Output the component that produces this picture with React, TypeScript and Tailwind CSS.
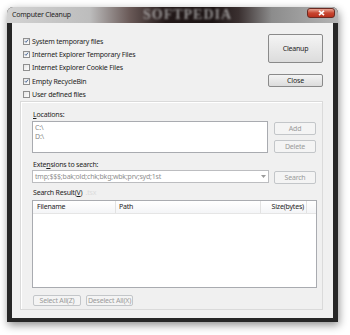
import React from 'react';

const font = "font-['Segoe_UI','Noto_Sans',sans-serif] tracking-[-0.2px]";

function Check({ checked, label }: { checked: boolean; label: string }) {
  return (
    <div className="flex items-center h-[13.3px]">
      <div className="w-[7px] h-[7px] border border-[#8f8f8f] bg-gradient-to-br from-[#e6e6e6] to-[#fdfdfd] flex items-center justify-center">
        {checked && (
          <svg width="6" height="6" viewBox="0 0 6 6">
            <path d="M1 3.2 L2.4 4.6 L5 1.2" stroke="#3c5d8f" strokeWidth="1.1" fill="none" />
          </svg>
        )}
      </div>
      <span className="ml-[2px] text-[7px] text-[#1e1e1e] leading-none whitespace-nowrap">{label}</span>
    </div>
  );
}

function Btn({ label, disabled, className }: { label: string; disabled?: boolean; className: string }) {
  return (
    <div
      className={
        'flex items-center justify-center whitespace-nowrap text-[7px] leading-none rounded-[2px] border ' +
        (disabled
          ? 'border-[#c3c6c9] bg-[#f4f4f4] text-[#9a9a9a] '
          : 'border-[#8a8a8a] bg-gradient-to-b from-[#f4f4f4] to-[#dcdcdc] text-[#1e1e1e] ') +
        className
      }
    >
      {label}
    </div>
  );
}

export default function App() {
  return (
    <div className={`w-[350px] h-[335px] bg-white pt-[7px] pl-[7px] ${font}`}>
      <div className="w-[331px] h-[315px] rounded-t-[6px] bg-[#262626] shadow-[1px_3px_8px_rgba(0,0,0,0.45)] flex flex-col overflow-hidden">
        {/* title bar */}
        <div className="relative h-[16px] shrink-0 bg-[linear-gradient(to_right,#d2d2d2_0%,#bdbdbd_25%,#6a5a58_37%,#221818_48%,#1c1414_62%,#3a3030_70%,#8c8c8c_80%,#b4b4b4_100%)]">
          <span className="absolute left-[5px] top-[4px] text-[7px] leading-none text-[#1e1e1e]">Computer Cleanup</span>
          <span className="absolute left-[136px] top-[1px] text-[14px] leading-none font-bold tracking-[1px] text-[#c4c4c4] opacity-70 blur-[0.8px] font-['Liberation_Serif',serif]">
            SOFTPEDIA
          </span>
          <div className="absolute right-[3px] top-[1px] w-[28px] h-[10px] rounded-[3px] border border-[#6b2a22] bg-gradient-to-b from-[#e8a595] via-[#c8452f] to-[#b8301c] flex items-center justify-center">
            <svg width="7" height="6" viewBox="0 0 7 6">
              <path d="M1 0.8 L6 5.2 M6 0.8 L1 5.2" stroke="#ffffff" strokeWidth="1.6" />
            </svg>
          </div>
        </div>
        {/* client */}
        <div className="mx-[5px] w-[321px] h-[295px] bg-[#f0f0f0] pt-[11px] pl-[8px] pr-[10px]">
          <div className="flex">
            <div className="flex flex-col ml-[3px] pt-[0.5px]">
              <Check checked label="System temporary files" />
              <Check checked label="Internet Explorer Temporary Files" />
              <Check checked={false} label="Internet Explorer Cookie Files" />
              <Check checked label="Empty RecycleBin" />
              <Check checked={false} label="User defined files" />
            </div>
            <div className="ml-auto flex flex-col w-[55px]">
              <Btn label="Cleanup" className="h-[29px] w-[55px]" />
              <Btn label="Close" className="h-[13px] w-[55px] mt-[11px]" />
            </div>
          </div>
          {/* panel */}
          <div className="h-[209px] border border-[#dadada] shadow-[inset_1px_1px_0_#ffffff] pl-[11px] pt-[8px] flex flex-col">
            <span className="text-[7px] leading-[10px] text-[#1e1e1e] ml-[1px]">
              <span className="underline">L</span>ocations:
            </span>
            <div className="flex mt-[1px]">
              <div className="w-[236px] h-[32px] border border-[#a9abb0] bg-white px-[2px] pt-[1px] text-[7px] leading-[9px] text-[#8a8a8a]">
                <div>C:\</div>
                <div>D:\</div>
              </div>
              <div className="flex flex-col ml-[6px] mt-[1px]">
                <Btn disabled label="Add" className="w-[42px] h-[13px]" />
                <Btn disabled label="Delete" className="w-[42px] h-[13px] mt-[5px]" />
              </div>
            </div>
            <span className="text-[7px] leading-[10px] text-[#1e1e1e] ml-[1px] mt-[7px]">
              Exte<span className="underline">n</span>sions to search:
            </span>
            <div className="flex">
              <div className="w-[237px] h-[13px] border border-[#bcbdc0] bg-white flex items-center px-[2px] text-[7px] leading-none text-[#8f8f8f]">
                <span className="whitespace-nowrap">tmp;$$$;bak;old;chk;bkg;wbk;prv;syd;1st</span>
                <svg className="ml-auto" width="5" height="3" viewBox="0 0 5 3">
                  <path d="M0 0 L5 0 L2.5 3 Z" fill="#9a9a9a" />
                </svg>
              </div>
              <Btn disabled label="Search" className="w-[42px] h-[13px] ml-[5px] mt-[1px]" />
            </div>
            <span className="text-[7px] leading-[10px] text-[#1e1e1e] ml-[1px] mt-[4px]">
              Search Result(<span className="underline">V</span>)
              <span className="ml-[3px] text-[#dcdcdc]">.tsx</span>
            </span>
            <div className="w-[285px] h-[88px] mt-[2px] border border-[#a9abb0] bg-white flex flex-col">
              <div className="h-[13px] flex text-[7px] leading-none text-[#1e1e1e] bg-gradient-to-b from-white to-[#f4f5f7] border-b border-[#e5e5e5]">
                <div className="w-[83px] border-r border-[#e2e2e2] flex items-center pl-[4px]">Filename</div>
                <div className="w-[145px] border-r border-[#e2e2e2] flex items-center pl-[3px]">Path</div>
                <div className="w-[46px] border-r border-[#e2e2e2] flex items-center justify-end pr-[2px] whitespace-nowrap">Size(bytes)</div>
              </div>
            </div>
            <div className="flex mt-[7px] ml-[1px]">
              <Btn disabled label="Select All(Z)" className="w-[48px] h-[11px]" />
              <Btn disabled label="Deselect All(X)" className="w-[47px] h-[11px] ml-[5px]" />
            </div>
          </div>
        </div>
      </div>
    </div>
  );
}
